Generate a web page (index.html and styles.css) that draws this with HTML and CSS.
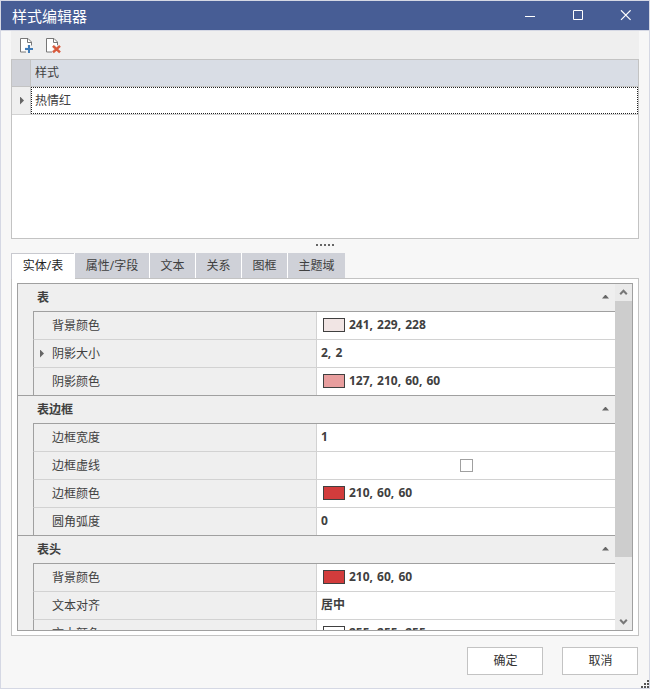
FILE: index.html
```html
<!DOCTYPE html>
<html lang="zh-CN">
<head>
<meta charset="utf-8">
<title>样式编辑器</title>
<link rel="stylesheet" href="styles.css">
</head>
<body>
<div class="window">
  <header class="titlebar">
    <h1>样式编辑器</h1>
    <svg class="controls" width="108" height="11" viewBox="0 0 108 11" fill="none" stroke="#fff">
      <path d="M0 6.500H10"/>
      <path d="M48.500 .5h9v9h-9z"/>
      <path d="M96 .3l9.600 9.600M105.600 .3L96 9.900" stroke-width="1.200"/>
    </svg>
  </header>
  <main class="content">
    <div class="toolbar">
      <svg width="14" height="16" viewBox="0 0 14 16" fill="none">
        <path d="M6 14H.5V.5H8L11.500 4V7.500" fill="#fff" stroke="#777"/>
        <path d="M7.500 1V4.500H11.500" stroke="#777"/>
        <path d="M9 7v8M5 11h8" stroke="#efefef" stroke-width="4"/>
        <path d="M9 7v8M5 11h8" stroke="#3f7bb8" stroke-width="2"/>
      </svg>
      <svg width="15" height="16" viewBox="0 0 15 16" fill="none">
        <path d="M6 14H.5V.5H8L11.500 4V7.500" fill="#fff" stroke="#777"/>
        <path d="M7.500 1V4.500H11.500" stroke="#777"/>
        <path d="M7 7.800l7 6.600M14 7.800l-7 6.600" stroke="#efefef" stroke-width="4"/>
        <path d="M7 7.800l7 6.600M14 7.800l-7 6.600" stroke="#d85a3c" stroke-width="2.500"/>
      </svg>
    </div>
    <section class="list">
      <div class="list-head"><span class="corner"></span><span class="list-cell">样式</span></div>
      <div class="list-row"><span class="gutter"><i class="arrow-right"></i></span><span class="list-cell focused">热情红</span></div>
    </section>
    <div class="splitter"><i></i><i></i><i></i><i></i><i></i></div>
    <nav class="tabs">
      <span class="tab active">实体/表</span>
      <span class="tab wide">属性/字段</span>
      <span class="tab">文本</span>
      <span class="tab">关系</span>
      <span class="tab">图框</span>
      <span class="tab domain">主题域</span>
    </nav>
    <section class="panel">
      <div class="properties">
        <div class="prop-list">
          <div class="category">表<i class="arrow-up"></i></div>
          <div class="group">
            <div class="prop"><span class="name">背景颜色</span><span class="value"><i class="swatch blush"></i>241, 229, 228</span></div>
            <div class="prop"><span class="name"><i class="arrow-right expand"></i>阴影大小</span><span class="value">2, 2</span></div>
            <div class="prop"><span class="name">阴影颜色</span><span class="value"><i class="swatch rose"></i>127, 210, 60, 60</span></div>
          </div>
          <div class="category">表边框<i class="arrow-up"></i></div>
          <div class="group">
            <div class="prop"><span class="name">边框宽度</span><span class="value">1</span></div>
            <div class="prop"><span class="name">边框虚线</span><span class="value centered"><i class="checkbox"></i></span></div>
            <div class="prop"><span class="name">边框颜色</span><span class="value"><i class="swatch red"></i>210, 60, 60</span></div>
            <div class="prop"><span class="name">圆角弧度</span><span class="value">0</span></div>
          </div>
          <div class="category">表头<i class="arrow-up"></i></div>
          <div class="group">
            <div class="prop"><span class="name">背景颜色</span><span class="value"><i class="swatch red"></i>210, 60, 60</span></div>
            <div class="prop"><span class="name">文本对齐</span><span class="value">居中</span></div>
            <div class="prop"><span class="name">文本颜色</span><span class="value"><i class="swatch white"></i>255, 255, 255</span></div>
          </div>
        </div>
        <div class="scrollbar">
          <svg class="scroll-button" width="17" height="17" viewBox="0 0 17 17"><path d="M5.200 10.300L8.500 6.700 11.800 10.300" fill="none" stroke="#777" stroke-width="2"/></svg>
          <div class="thumb"></div>
          <svg class="scroll-button" width="17" height="17" viewBox="0 0 17 17"><path d="M5.200 6.700L8.500 10.300 11.800 6.700" fill="none" stroke="#777" stroke-width="2"/></svg>
        </div>
      </div>
    </section>
    <footer class="actions"><button>确定</button><button>取消</button></footer>
  </main>
  <svg class="grip" width="8" height="8" viewBox="0 0 8 8" fill="#555"><path d="M6 0h2v2H6zM3 3h2v2H3zM6 3h2v2H6zM0 6h2v2H0zM3 6h2v2H3zM6 6h2v2H6z"/></svg>
</div>
</body>
</html>
```
FILE: styles.css
```css
* { box-sizing: border-box; }

body {
  margin: 0;
  font: 12px/18px "Open Sans", "Noto Sans CJK SC", sans-serif;
  color: #404040;
}

.window {
  position: relative;
  width: 650px;
  height: 689px;
  border: 1px solid #d5d8e4;
  background: #f7f7f7;
  overflow: hidden;
}

.titlebar {
  display: flex;
  align-items: center;
  justify-content: space-between;
  height: 30px;
  padding: 0 16px 0 11px;
  background: #475d95;
  border-bottom: 1px solid #d5d8e4;
}

.titlebar h1 {
  margin: 0;
  font-size: 15px;
  font-weight: 400;
  line-height: 28px;
  color: #fff;
}

.controls { display: block; }

.content {
  display: flex;
  flex-direction: column;
  padding: 0 10px;
}

.toolbar {
  display: flex;
  gap: 12px;
  height: 28px;
  padding: 7px 9px;
  background: #efefef;
}

.toolbar svg { display: block; }

.list {
  height: 180px;
  border: 1px solid #c3c3c3;
  background: #fff;
}

.list-head, .list-row { display: flex; }
.list-head { height: 27px; background: #d9dde5; border-bottom: 1px solid #c3c3c3; }
.list-row { height: 28px; border-bottom: 1px solid #d2d2d2; }

.corner, .gutter {
  width: 19px;
  border-right: 1px solid #c3c3c3;
}

.corner { background: #cfd1d8; }

.gutter {
  display: flex;
  align-items: center;
  padding-left: 8px;
  background: #efefef;
}

.list-cell { flex: 1; padding: 4px 4px 0; }
.focused { border: 1px dotted #222; padding: 4px 3px 0; }

.arrow-right {
  width: 4px;
  height: 8px;
  background: #666;
  clip-path: polygon(0 0, 100% 50%, 0 100%);
}

.arrow-up {
  width: 7px;
  height: 4px;
  background: #666;
  clip-path: polygon(50% 0, 100% 100%, 0 100%);
}

.splitter {
  display: flex;
  justify-content: center;
  gap: 2px;
  height: 14px;
  padding-top: 5px;
}

.splitter i { width: 2px; height: 2px; background: #666; }

.tabs { display: flex; gap: 1px; height: 25px; }

.tab {
  width: 45px;
  line-height: 25px;
  text-align: center;
  background: #cfd1d8;
  box-shadow: 1px 0 #fff;
}

.tab.active {
  width: 63px;
  height: 26px;
  margin-bottom: -1px;
  z-index: 1;
  background: #fff;
  border: 1px solid #c8c9cf;
  border-width: 1px 0 0 1px;
  line-height: 24px;
  color: #222;
}

.tab.wide { width: 74px; }
.tab.domain { width: 57px; box-shadow: none; }

.panel {
  height: 358px;
  padding: 4px 5px;
  background: #fff;
  border: 1px solid #c3c3c3;
}

.properties {
  display: flex;
  height: 348px;
  border: 1px solid #a0a0a0;
  background: #efefef;
}

.prop-list { flex: 1; overflow: hidden; }

.category {
  display: flex;
  align-items: center;
  justify-content: space-between;
  height: 27px;
  padding: 0 6px 0 19px;
  font-weight: 700;
}

.category .arrow-up { margin-top: -2px; }

.group {
  position: relative;
  padding-left: 15px;
  border-bottom: 1px solid #a0a0a0;
}

.prop {
  display: flex;
  height: 28px;
  border-left: 1px solid #a0a0a0;
  border-bottom: 1px solid #d2d2d2;
}

.prop:first-child { height: 29px; border-top: 1px solid #a0a0a0; }
.prop:last-child { height: 27px; border-bottom: 0; }

.name {
  display: flex;
  align-items: center;
  width: 283px;
  padding-left: 18px;
  border-right: 1px solid #d2d2d2;
}

.expand { margin: 0 8px 0 -12px; }

.value {
  display: flex;
  align-items: center;
  flex: 1;
  padding: 0 0 1px 4px;
  background: #fff;
  font-weight: 700;
  word-spacing: 1px;
}

.swatch {
  width: 22px;
  height: 14px;
  margin: 0 4px 0 2px;
  border: 1px solid #404040;
}

.blush { background: #f1e5e4; }
.rose { background: #e89e9e; }
.red { background: #d23c3c; }
.white { background: #fff; }

.centered { justify-content: center; padding: 0; }
.checkbox { width: 13px; height: 13px; border: 1px solid #a0a0a0; }

.scrollbar {
  display: flex;
  flex-direction: column;
  justify-content: space-between;
  width: 17px;
  background: #eaeaea;
}

.scroll-button { display: block; }
.thumb { height: 256px; margin-bottom: auto; background: #cdcdcd; }

.actions {
  display: flex;
  justify-content: flex-end;
  gap: 19px;
  padding: 11px 1px 0 0;
}

button {
  width: 76px;
  height: 28px;
  padding: 0 0 0 1px;
  border: 1px solid #c3c3c3;
  background: #fff;
  color: #333;
  font: inherit;
}

.grip { position: absolute; right: 0; bottom: 0; }
```
